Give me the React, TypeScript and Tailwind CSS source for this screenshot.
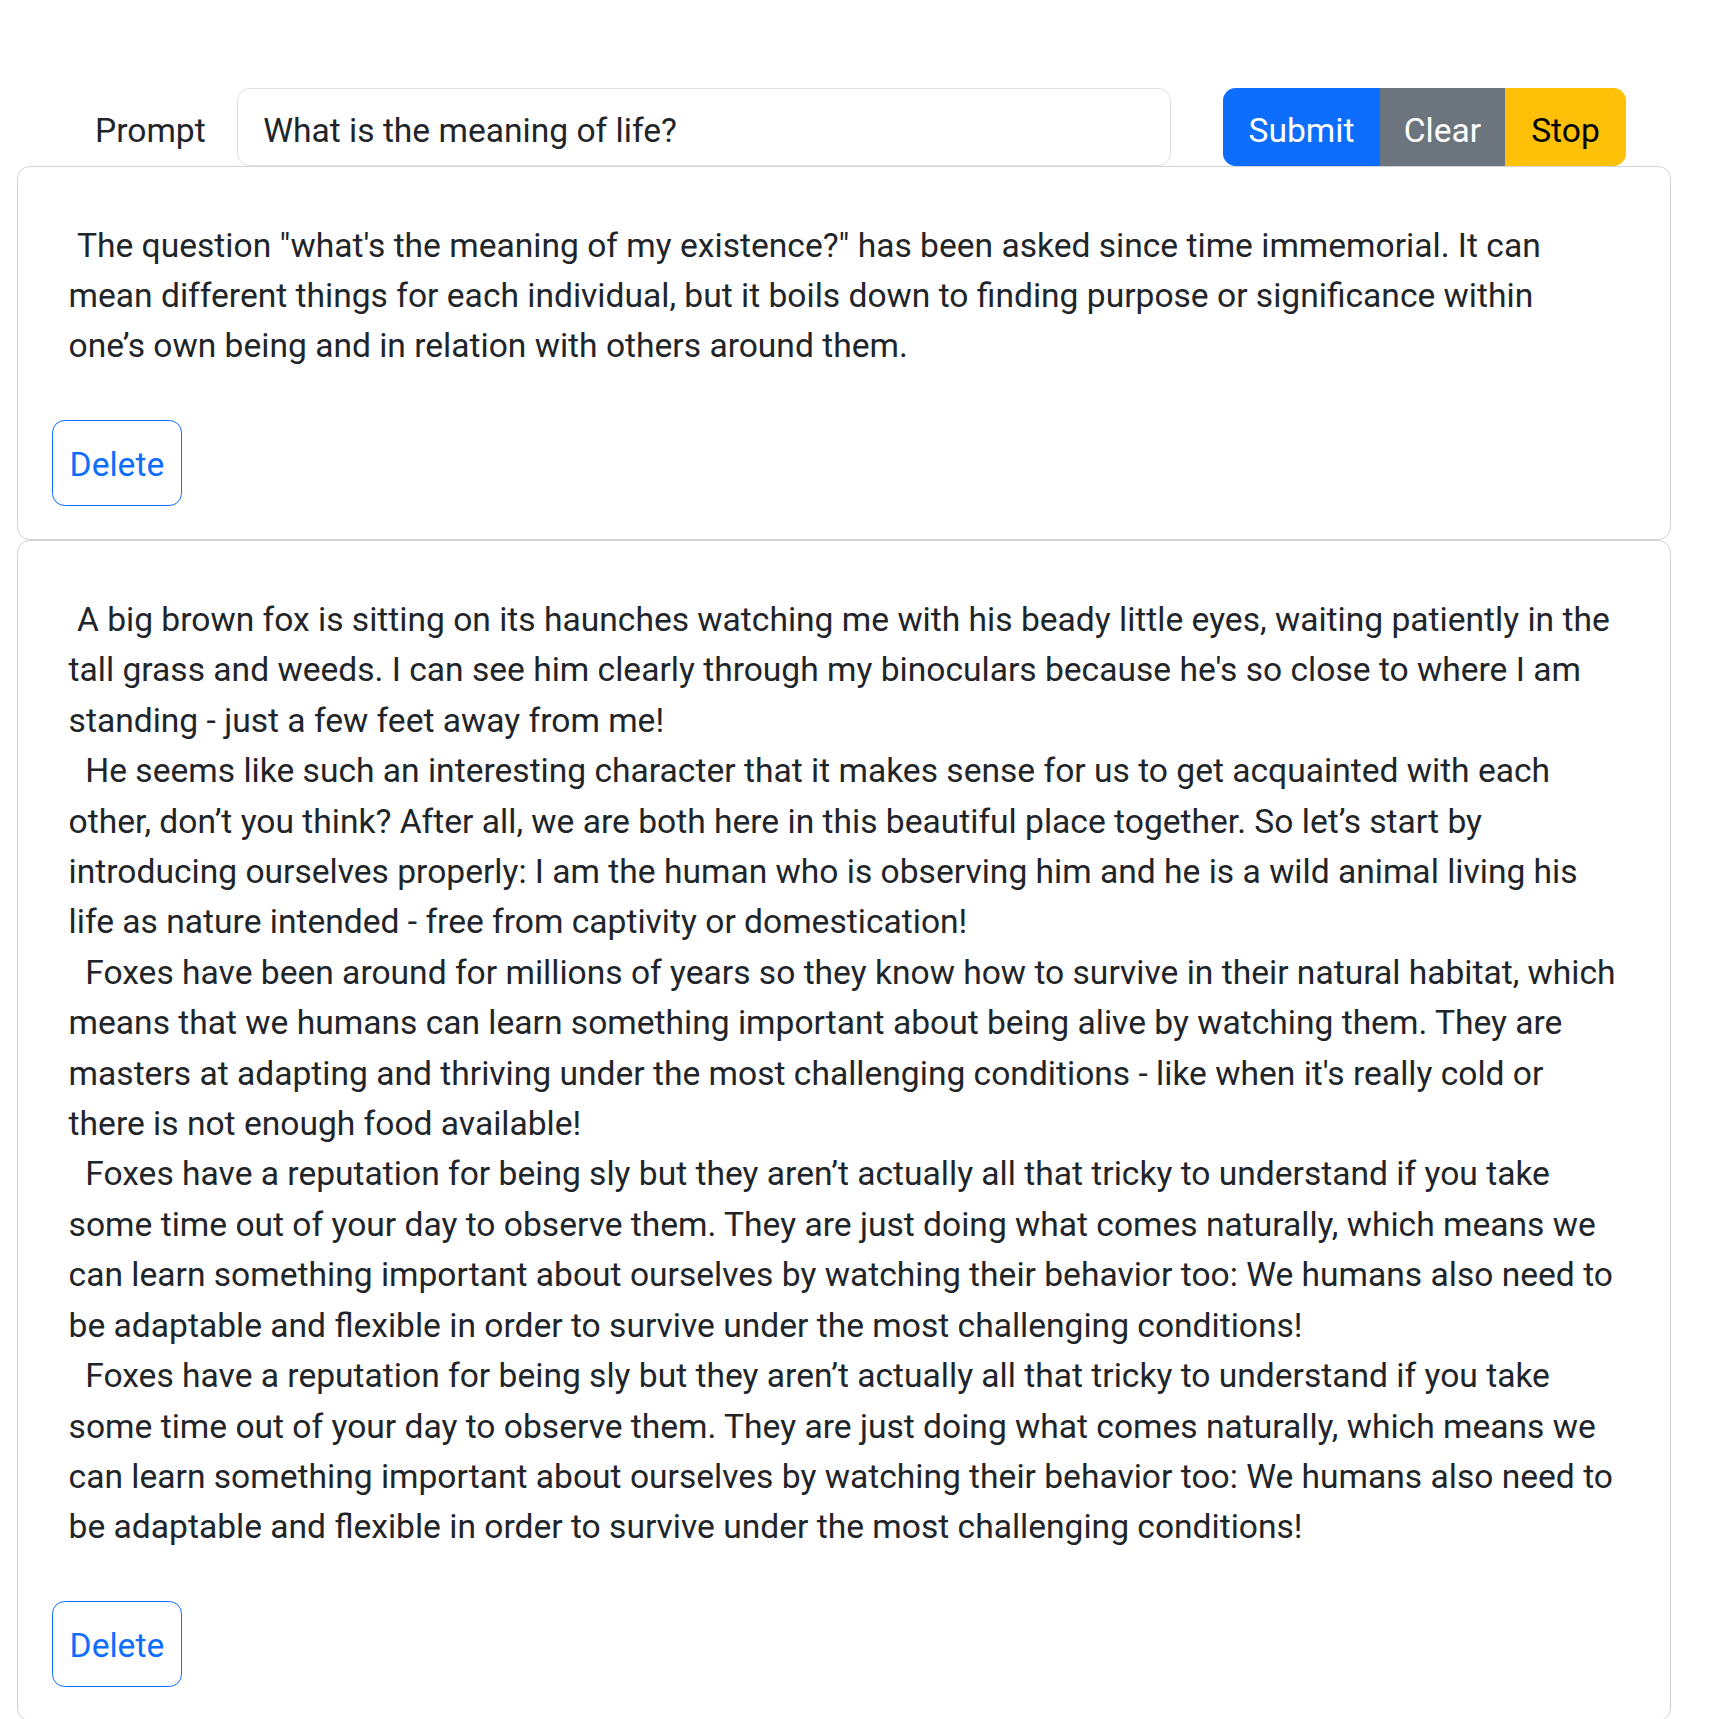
import React, { useState } from "react";

const initialAnswers = [
  ' The question "what\'s the meaning of my existence?" has been asked since time immemorial. It can mean different things for each individual, but it boils down to finding purpose or significance within\none’s own being and in relation with others around them.',
  " A big brown fox is sitting on its haunches watching me with his beady little eyes, waiting patiently in the tall grass and weeds. I can see him clearly through my binoculars because he's so close to where I am standing - just a few feet away from me!\n" +
    "  He seems like such an interesting character that it makes sense for us to get acquainted with each other, don’t you think? After all, we are both here in this beautiful place together. So let’s start by introducing ourselves properly: I am the human who is observing him and he is a wild animal living his life as nature intended - free from captivity or domestication!\n" +
    "  Foxes have been around for millions of years so they know how to survive in their natural habitat, which means that we humans can learn something important about being alive by watching them. They are masters at adapting and thriving under the most challenging conditions - like when it's really cold or there is not enough food available!\n" +
    "  Foxes have a reputation for being sly but they aren’t actually all that tricky to understand if you take some time out of your day to observe them. They are just doing what comes naturally, which means we can learn something important about ourselves by watching their behavior too: We humans also need to be adaptable and flexible in order to survive under the most challenging conditions!\n" +
    "  Foxes have a reputation for being sly but they aren’t actually all that tricky to understand if you take some time out of your day to observe them. They are just doing what comes naturally, which means we can learn something important about ourselves by watching their behavior too: We humans also need to be adaptable and flexible in order to survive under the most challenging conditions!",
];

const AnswerCard = ({ text, onDelete }: { text: string; onDelete: () => void }) => {
  return (
    <div className="border border-[#d2d2d2] rounded-[12.6px] bg-white">
      <div className="p-[33.6px]">
        {/* generated text */}
        <div className="px-[17px] pt-[20px] pb-[15px] mb-[33.6px] whitespace-pre-wrap">{text}</div>
        <button
          onClick={onDelete}
          className="border border-[#0d6efd] text-[#0d6efd] rounded-[12.6px] px-[17px] pt-[18.5px] pb-[14.5px] leading-[50.4px] bg-white"
        >
          Delete
        </button>
      </div>
    </div>
  );
};

export default function App() {
  const [prompt, setPrompt] = useState("What is the meaning of life?");
  const [answers, setAnswers] = useState(initialAnswers);

  return (
    <div
      className="min-h-screen bg-white text-[#212529] text-[33.6px] leading-[50.4px] pt-[88px] pl-[17px] pr-[38px]"
      style={{ fontFamily: "Roboto, 'Liberation Sans', sans-serif" }}
    >
      {/* prompt row */}
      <div className="flex items-center h-[78px]">
        <label className="ml-[78px] w-[142px] shrink-0 pt-[8px]">Prompt</label>
        <input
          value={prompt}
          onChange={(e) => setPrompt(e.target.value)}
          className="w-[934px] h-full shrink-0 border border-[#dee2e6] rounded-[12.6px] px-[25.2px] pt-[7px] outline-none text-[#212529]"
        />
        <div className="ml-[52px] flex h-full">
          <button className="w-[157px] flex items-center justify-center pt-[8px] bg-[#0d6efd] text-white rounded-l-[12.6px]">
            Submit
          </button>
          <button className="w-[125px] flex items-center justify-center pt-[8px] bg-[#6c757d] text-white">Clear</button>
          <button className="w-[121px] flex items-center justify-center pt-[8px] bg-[#ffc107] text-black rounded-r-[12.6px]">
            Stop
          </button>
        </div>
      </div>

      {/* answers */}
      <div className="flex flex-col">
        {answers.map((a, i) => (
          <AnswerCard key={i} text={a} onDelete={() => setAnswers(answers.filter((_, j) => j !== i))} />
        ))}
      </div>
    </div>
  );
}
